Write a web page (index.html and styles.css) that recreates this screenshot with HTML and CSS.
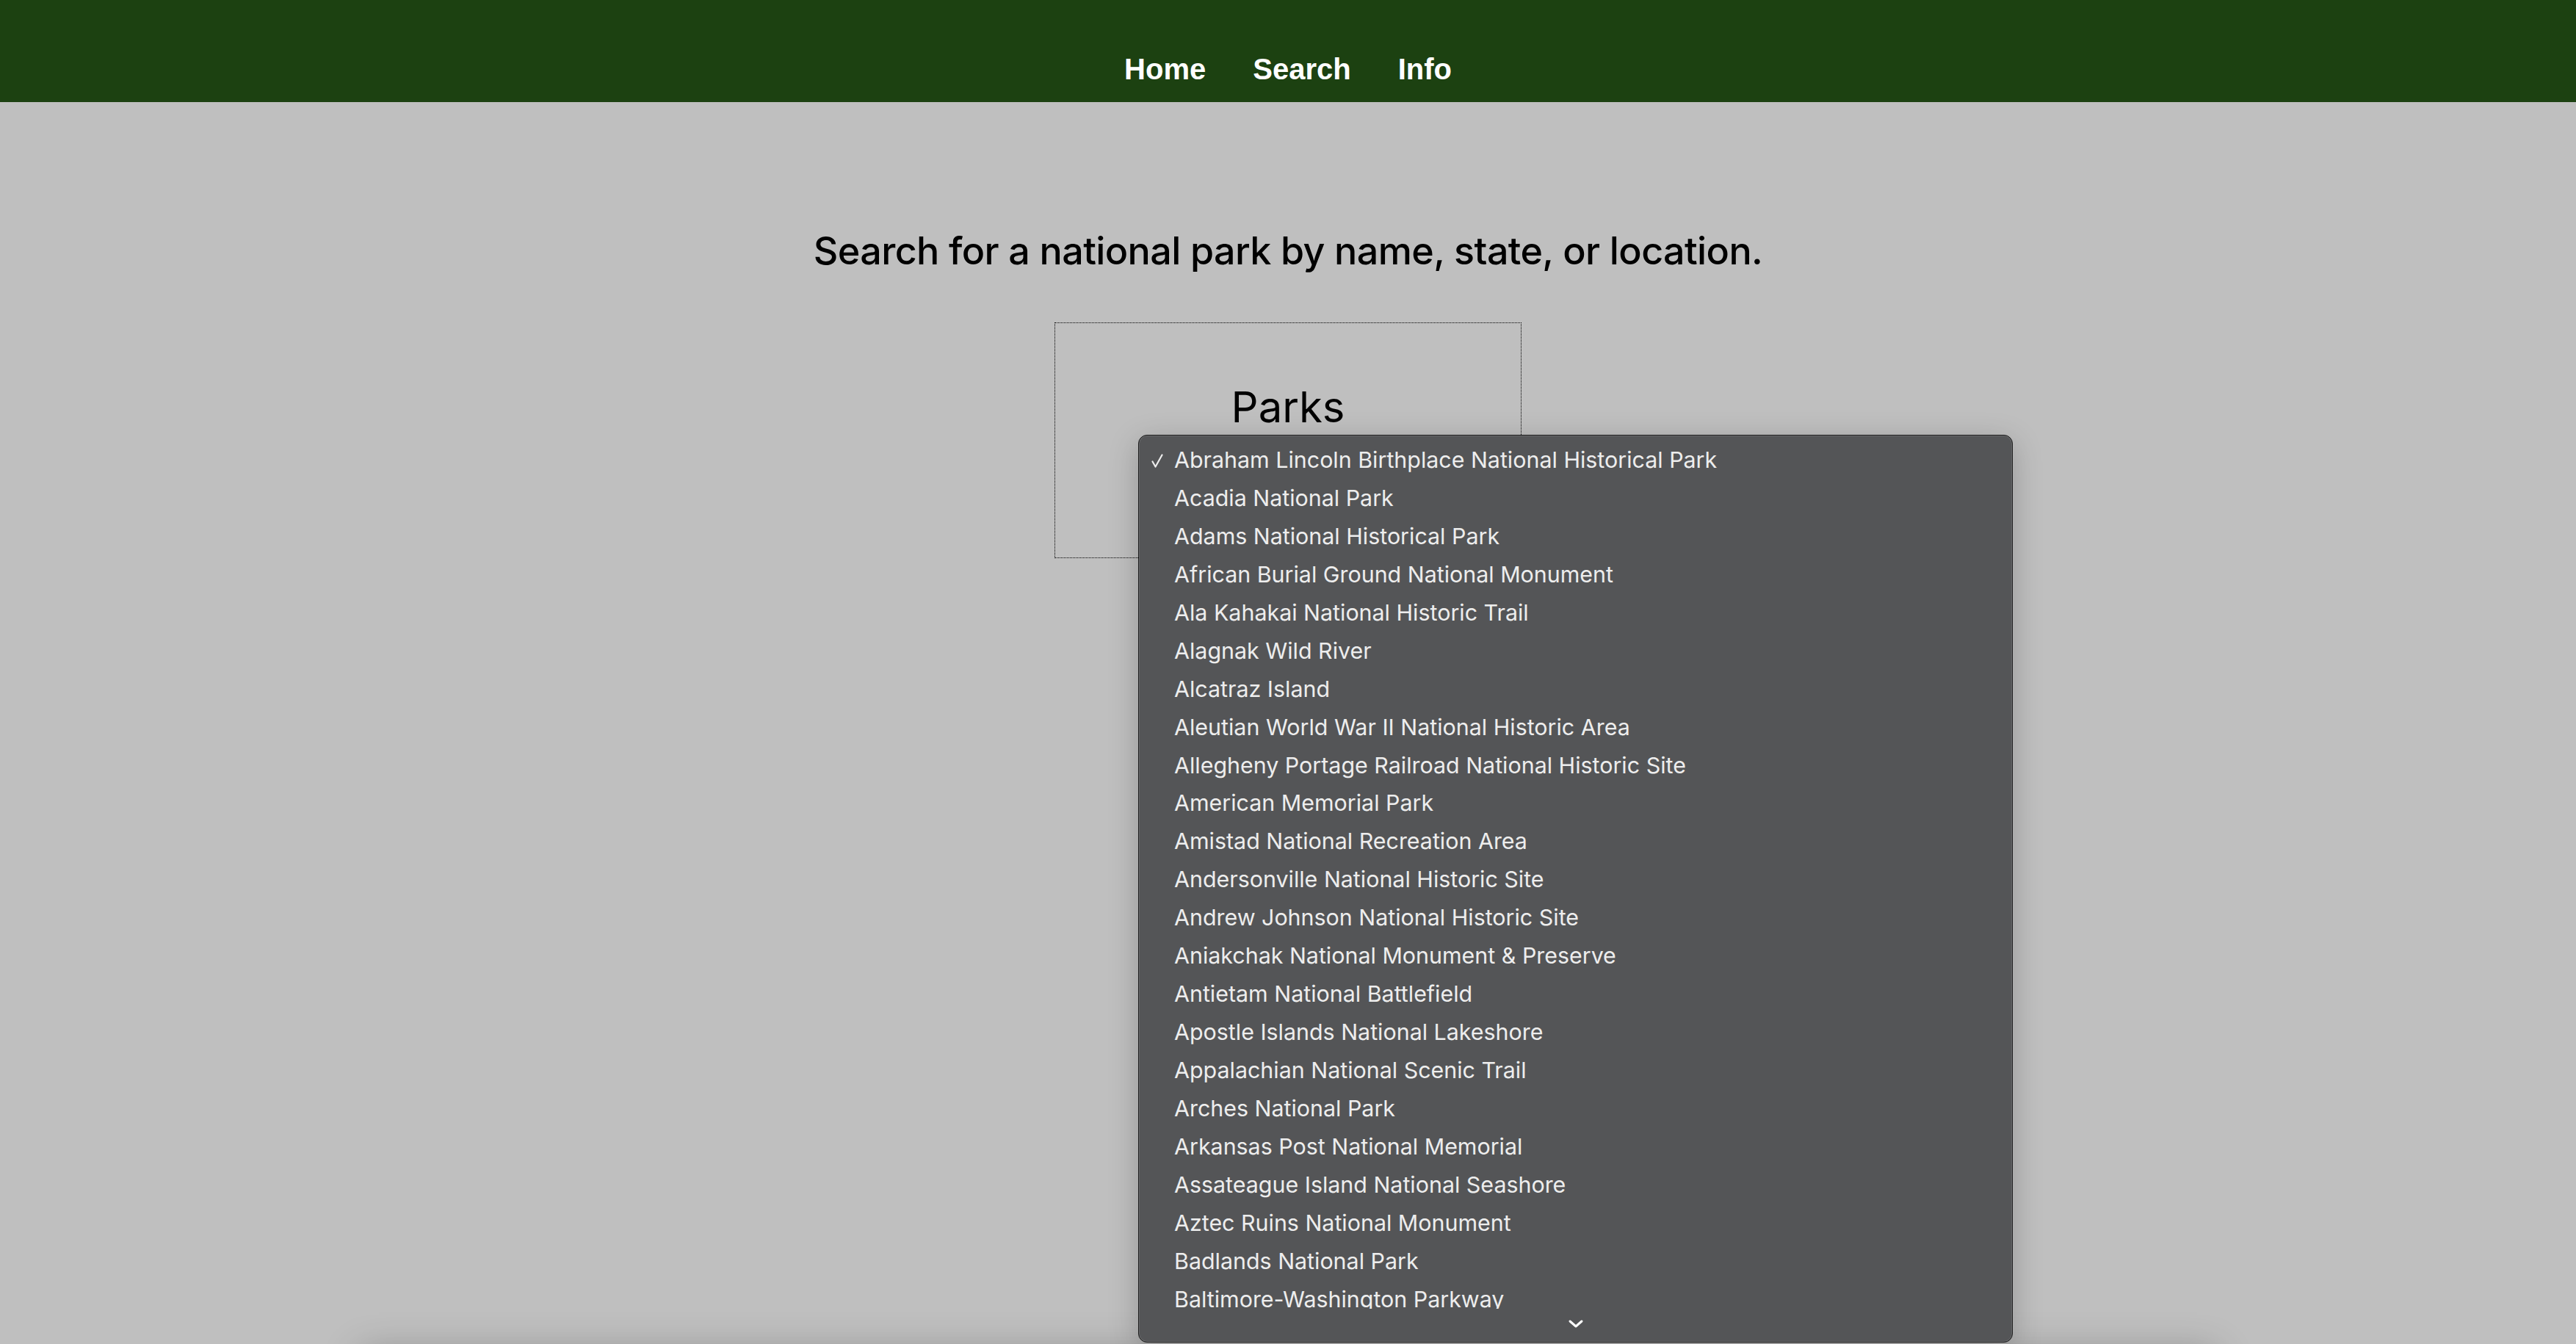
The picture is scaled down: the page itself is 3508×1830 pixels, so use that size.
FILE: index.html
```html
<!DOCTYPE html>
<html lang="en">
<head>
<meta charset="utf-8">
<title>Search</title>
<link rel="stylesheet" href="styles.css">
</head>
<body>
<nav class="topnav">
  <a class="navlink" href="#">Home</a>
  <a class="navlink" href="#">Search</a>
  <a class="navlink" href="#">Info</a>
</nav>
<main class="page">
  <h1 class="title">Search for a national park by name, state, or location.</h1>
  <form class="search-box">
    <label class="box-label">Parks</label>
    <div class="select-slot"></div>
  </form>
  <section class="results"></section>
</main>
<div class="popup">
  <ul class="popup-list">
    <li class="opt"><svg class="check" width="16" height="20" viewBox="0 0 16 20"><polyline points="1.5,10.5 5.5,17.5 14.5,1.5" fill="none" stroke="#ececec" stroke-width="2.2" stroke-linecap="round" stroke-linejoin="round"/></svg>Abraham Lincoln Birthplace National Historical Park</li>
    <li class="opt">Acadia National Park</li>
    <li class="opt">Adams National Historical Park</li>
    <li class="opt">African Burial Ground National Monument</li>
    <li class="opt">Ala Kahakai National Historic Trail</li>
    <li class="opt">Alagnak Wild River</li>
    <li class="opt">Alcatraz Island</li>
    <li class="opt">Aleutian World War II National Historic Area</li>
    <li class="opt">Allegheny Portage Railroad National Historic Site</li>
    <li class="opt">American Memorial Park</li>
    <li class="opt">Amistad National Recreation Area</li>
    <li class="opt">Andersonville National Historic Site</li>
    <li class="opt">Andrew Johnson National Historic Site</li>
    <li class="opt">Aniakchak National Monument &amp; Preserve</li>
    <li class="opt">Antietam National Battlefield</li>
    <li class="opt">Apostle Islands National Lakeshore</li>
    <li class="opt">Appalachian National Scenic Trail</li>
    <li class="opt">Arches National Park</li>
    <li class="opt">Arkansas Post National Memorial</li>
    <li class="opt">Assateague Island National Seashore</li>
    <li class="opt">Aztec Ruins National Monument</li>
    <li class="opt">Badlands National Park</li>
    <li class="opt">Baltimore-Washington Parkway</li>
    <li class="opt">Bandelier National Monument</li>
    <li class="opt">Benjamin Franklin National Memorial</li>
  </ul>
  <div class="popup-scroll">
    <svg width="22" height="14" viewBox="0 0 22 14"><polyline points="3,3 11,10 19,3" fill="none" stroke="#ffffff" stroke-width="3" stroke-linecap="round" stroke-linejoin="round"/></svg>
  </div>
</div>
</body>
</html>
```

FILE: styles.css
```css
* { box-sizing: border-box; }

html, body {
  margin: 0;
  padding: 0;
  background: #bfbfbf;
  font-family: "Liberation Sans", Arial, sans-serif;
}

body { position: relative; }

.topnav {
  display: flex;
  justify-content: center;
  gap: 64px;
  background: #1c4111;
  padding: 74px 0 25px;
}

.navlink {
  color: #ffffff;
  font: 700 40px/40px "Liberation Sans", Arial, sans-serif;
  text-decoration: none;
}

.page {
  display: flex;
  flex-direction: column;
  align-items: center;
}

.title {
  margin: 177px 0 0;
  font: 500 52px/52px "Inter", "Liberation Sans", sans-serif;
  letter-spacing: -0.6px;
  color: #000000;
  text-align: center;
}

.search-box {
  margin-top: 71px;
  width: 636px;
  height: 321px;
  border: 1px dotted #000000;
  padding-top: 85px;
  display: flex;
  flex-direction: column;
  align-items: center;
  gap: 20px;
}

.box-label {
  font: 400 58px/58px "Inter", "Liberation Sans", sans-serif;
  color: #000000;
}

.select-slot {
  width: 400px;
  height: 40px;
}

.results {
  margin-top: 1084px;
  width: 72%;
  height: 400px;
  background: #bfbfbf;
  box-shadow: 0 0 50px rgba(0, 0, 0, 0.3);
}

.popup {
  position: absolute;
  left: 1550px;
  top: 592px;
  width: 1191px;
  height: 1236px;
  background: #545557;
  border: 1px solid #1b1b1b;
  border-radius: 12px;
  box-shadow: inset 0 0 0 1px rgba(255, 255, 255, 0.12), 0 10px 40px rgba(0, 0, 0, 0.22);
  display: flex;
  flex-direction: column;
  overflow: hidden;
}

.popup-list {
  list-style: none;
  margin: 0;
  padding: 8px 0 0;
  height: 1189px;
  flex: none;
  overflow: hidden;
}

.opt {
  position: relative;
  height: 51.95px;
  padding-left: 48px;
  font: 400 30.4px/51.95px "Inter", "Liberation Sans", sans-serif;
  color: #ededed;
  white-space: nowrap;
}

.check {
  position: absolute;
  left: 17px;
  top: 17px;
}

.popup-scroll {
  flex: 1;
  display: flex;
  justify-content: center;
  align-items: center;
  padding-bottom: 4px;
}
```
